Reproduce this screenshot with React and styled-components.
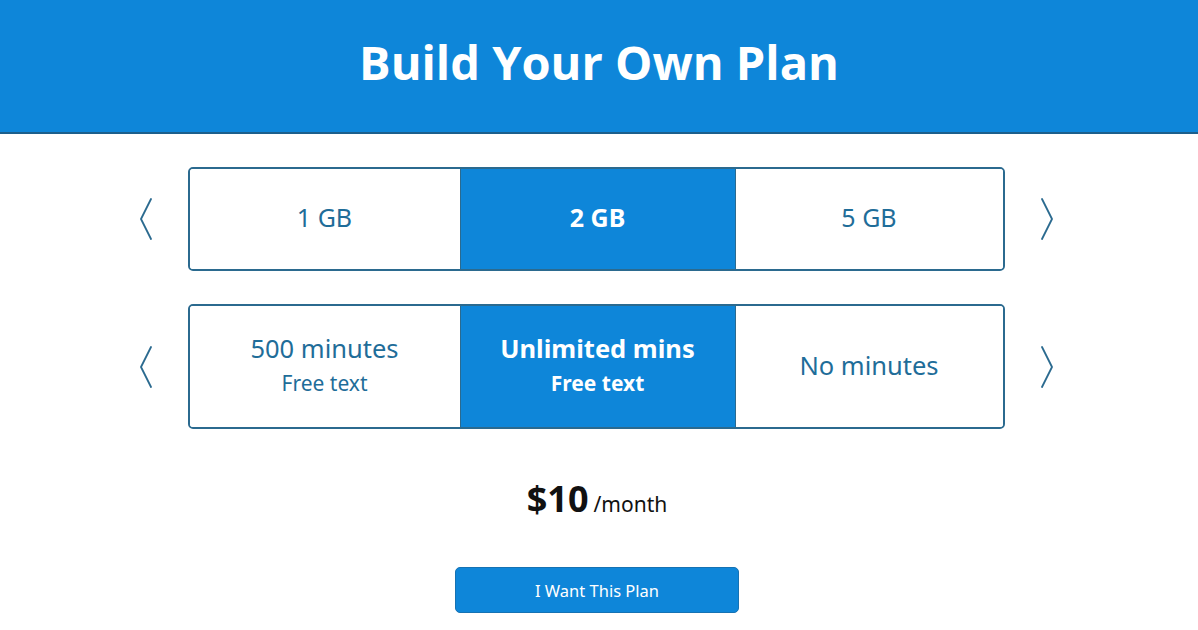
import React, { useState } from 'react';
import styled, { createGlobalStyle } from 'styled-components';

const GlobalStyle = createGlobalStyle`
  body {
    margin: 0;
    background: #ffffff;
    font-family: "Noto Sans", "Open Sans", sans-serif;
  }
`;

const Page = styled.div`
  width: 1198px;
  height: 630px;
  overflow: hidden;
  display: flex;
  flex-direction: column;
  align-items: center;
`;

const Header = styled.header`
  width: 100%;
  height: 134px;
  background-color: #0e86d9;
  border-bottom: 2px solid #1c5f8c;
  display: flex;
  justify-content: center;
  padding-top: 29px;
  box-sizing: border-box;
`;

const Title = styled.h1`
  margin: 0;
  color: #ffffff;
  font-family: "Open Sans", "Noto Sans", sans-serif;
  font-weight: 700;
  font-size: 47px;
  line-height: 66px;
`;

const Selector = styled.div`
  display: flex;
  align-items: center;
  gap: 34px;
  margin-top: 33px;
  margin-right: 6px;
`;

const Arrow = styled.button`
  border: none;
  background: none;
  padding: 0;
  width: 16px;
  display: flex;
  justify-content: center;
  cursor: pointer;
`;

const Track = styled.div`
  width: 817px;
  height: ${(p) => p.height}px;
  box-sizing: border-box;
  border: 2px solid #2b6a8f;
  border-radius: 5px;
  display: grid;
  grid-template-columns: 270px 276px 1fr;
  overflow: hidden;
`;

const Option = styled.div`
  display: flex;
  flex-direction: column;
  align-items: center;
  justify-content: center;
  gap: 5px;
  padding-bottom: ${(p) => p.lift}px;
  cursor: pointer;
  background-color: ${(p) => (p.active ? '#0e86d9' : '#ffffff')};
  color: ${(p) => (p.active ? '#ffffff' : '#1f6d99')};
  font-weight: ${(p) => (p.active ? 700 : 400)};
  border-left: ${(p) => (p.active ? '1px solid #2b6a8f' : 'none')};
  border-right: ${(p) => (p.active ? '1px solid #2b6a8f' : 'none')};
`;

const Main = styled.span`
  font-size: ${(p) => p.size}px;
  line-height: 32px;
`;

const Sub = styled.span`
  font-size: 21px;
  line-height: 28px;
`;

const Price = styled.div`
  margin-top: 45px;
  margin-right: 4px;
  display: flex;
  align-items: baseline;
  gap: 5px;
  color: #111111;
`;

const Amount = styled.span`
  font-size: 36px;
  font-weight: 700;
`;

const Period = styled.span`
  font-size: 21px;
`;

const CTA = styled.button`
  margin-top: 44px;
  margin-right: 4px;
  width: 284px;
  height: 46px;
  border: 1px solid #1672b3;
  border-radius: 5px;
  background-color: #0e86d9;
  color: #ffffff;
  font-family: "Noto Sans", "Open Sans", sans-serif;
  font-size: 16.5px;
  cursor: pointer;
`;

const Chevron = ({ dir }) => (
  <svg width="14" height="42" viewBox="0 0 14 42" fill="none">
    <path
      d={dir === 'left' ? 'M12 1 L2 21 L12 41' : 'M2 1 L12 21 L2 41'}
      stroke="#2b6a8f"
      strokeWidth="1.8"
      strokeLinecap="round"
      strokeLinejoin="round"
    />
  </svg>
);

const data = [
  { label: '1 GB' },
  { label: '2 GB' },
  { label: '5 GB' },
];

const minutes = [
  { label: '500 minutes', sub: 'Free text' },
  { label: 'Unlimited mins', sub: 'Free text' },
  { label: 'No minutes' },
];

const Row = ({ items, active, setActive, height, size, lift }) => (
  <Selector>
    <Arrow onClick={() => setActive(Math.max(0, active - 1))}>
      <Chevron dir="left" />
    </Arrow>
    <Track height={height}>
      {items.map((it, i) => (
        <Option key={it.label} active={i === active} lift={lift} onClick={() => setActive(i)}>
          <Main size={size}>{it.label}</Main>
          {it.sub && <Sub>{it.sub}</Sub>}
        </Option>
      ))}
    </Track>
    <Arrow onClick={() => setActive(Math.min(items.length - 1, active + 1))}>
      <Chevron dir="right" />
    </Arrow>
  </Selector>
);

export default function App() {
  const [gb, setGb] = useState(1);
  const [mins, setMins] = useState(1);
  return (
    <Page>
      <GlobalStyle />
      <Header>
        <Title>Build Your Own Plan</Title>
      </Header>
      <Row items={data} active={gb} setActive={setGb} height={104} size={25} lift={4} />
      <Row items={minutes} active={mins} setActive={setMins} height={125} size={25.5} lift={4} />
      <Price>
        <Amount>$10</Amount>
        <Period>/month</Period>
      </Price>
      <CTA>I Want This Plan</CTA>
    </Page>
  );
}
